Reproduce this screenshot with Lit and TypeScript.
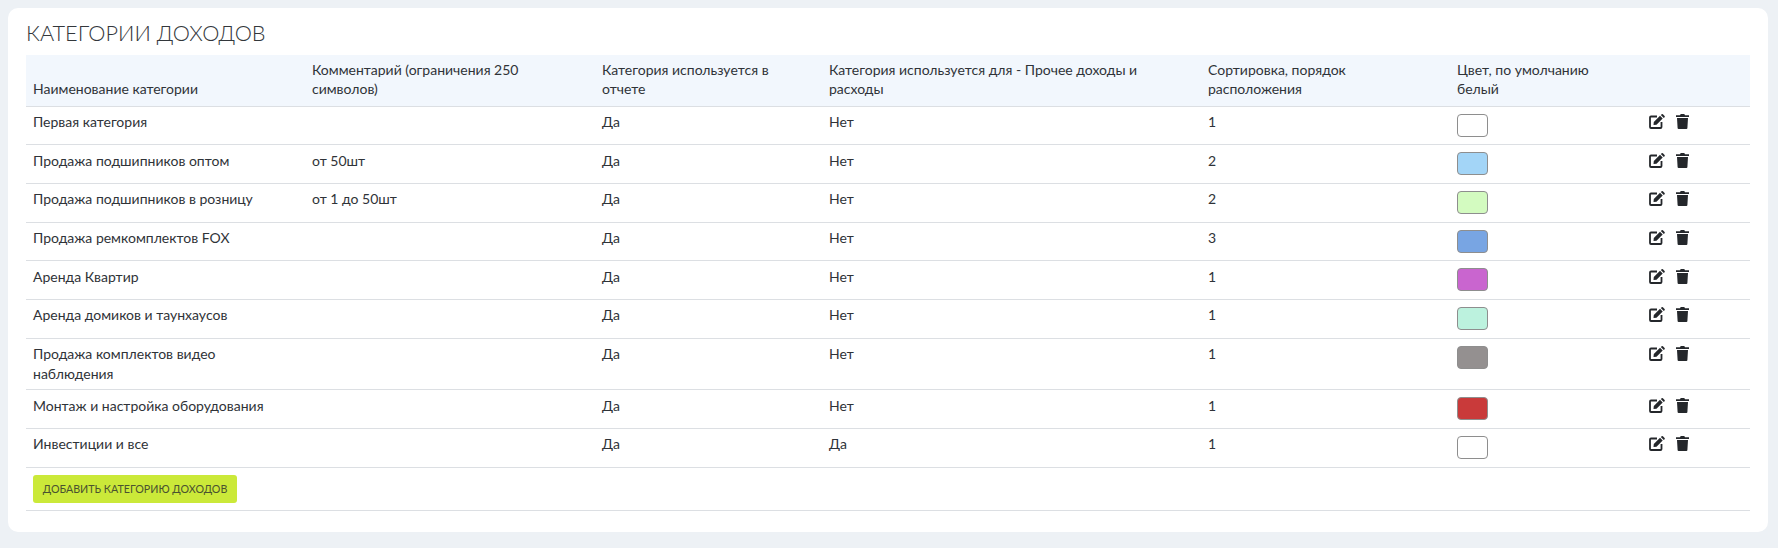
import { LitElement, html, css, svg } from "lit";
import { customElement } from "lit/decorators.js";

const rows = [
  ["Первая категория", "", "Да", "Нет", "1", "#ffffff"],
  ["Продажа подшипников оптом", "от 50шт", "Да", "Нет", "2", "#a3d5f7"],
  ["Продажа подшипников в розницу", "от 1 до 50шт", "Да", "Нет", "2", "#d3fbc0"],
  ["Продажа ремкомплектов FOX", "", "Да", "Нет", "3", "#78a5e3"],
  ["Аренда Квартир", "", "Да", "Нет", "1", "#c965cf"],
  ["Аренда домиков и таунхаусов", "", "Да", "Нет", "1", "#bcf2de"],
  ["Продажа комплектов видео наблюдения", "", "Да", "Нет", "1", "#949090"],
  ["Монтаж и настройка оборудования", "", "Да", "Нет", "1", "#c93a3a"],
  ["Инвестиции и все", "", "Да", "Да", "1", "#ffffff"],
];

const editIcon = svg`<path fill="none" stroke="currentColor" stroke-width="1.800" d="M8 2.500H2a1 1 0 0 0-1 1V13a1 1 0 0 0 1 1h9.500a1 1 0 0 0 1-1V8"/><path fill="currentColor" d="M4.800 8l6.200-6.200 2.700 2.700-6.200 6.200-3 .4zM11.800 1l.9-.7a1 1 0 0 1 1.200 0l1.700 1.700a1 1 0 0 1 0 1.200l-.8.9z"/>`;
const trashIcon = svg`<path fill="currentColor" d="M4 1.200 4.700 0h3.600l.7 1.200H13V3H0V1.200zM1 4h11l-.6 10a1 1 0 0 1-1 1H2.600a1 1 0 0 1-1-1z"/>`;

@customElement("app-root")
export class AppRoot extends LitElement {
  static styles = css`
    :host { display: block; min-height: 548px; background: #edf1f5; padding: 8px 10px 16px 8px; box-sizing: border-box; font-family: "Lato", "Open Sans", sans-serif; color: #2f3338; }
    .card { background: #fff; border-radius: 10px; padding: 7px 18px 22px 18px; height: 524px; box-sizing: border-box; }
    h2 { margin: 0 0 4px; font-size: 21.700px; font-weight: 300; line-height: 36px; color: #33373b; }
    table { width: 100%; border-collapse: collapse; table-layout: fixed; font-size: 14px; line-height: 19.500px; }
    .c1 { width: 279px; } .c2 { width: 290px; } .c3 { width: 227px; } .c4 { width: 379px; } .c5 { width: 249px; } .c6 { width: 192px; }
    th { background: #f2f7fd; font-weight: 400; text-align: left; vertical-align: bottom; padding: 4px 36px 7px 7px; height: 51px; box-sizing: border-box; border-bottom: 1px solid #dcdfe3; }
    td { vertical-align: top; padding: 5.500px 7px 6px; height: 38.700px; box-sizing: border-box; border-bottom: 1px solid #dcdfe3; }
    td.name { padding-right: 30px; }
    .swatch { width: 31px; height: 23px; box-sizing: border-box; border: 1px solid #8e8e8e; border-radius: 4px; margin-top: 1.500px; }
    .actions { display: flex; gap: 11px; align-items: flex-start; color: #24272b; padding-top: 2px; }
    .actions svg { display: block; }
    td.add { padding: 7px 7px 7px; height: 43px; }
    button { display: block; background: #cbe939; border: 0; border-radius: 3px; height: 28px; width: 204px; padding: 0; font: inherit; font-size: 10.700px; line-height: 28px; text-align: center; white-space: nowrap; color: #4a5230; }
  `;
  render() {
    return html`<div class="card">
      <h2>КАТЕГОРИИ ДОХОДОВ</h2>
      <table>
        <colgroup><col class="c1"><col class="c2"><col class="c3"><col class="c4"><col class="c5"><col class="c6"><col></colgroup>
        <thead><tr>
          <th>Наименование категории</th>
          <th>Комментарий (ограничения 250 символов)</th>
          <th>Категория используется в отчете</th>
          <th>Категория используется для - Прочее доходы и расходы</th>
          <th>Сортировка, порядок расположения</th>
          <th>Цвет, по умолчанию белый</th>
          <th></th>
        </tr></thead>
        <tbody>
          ${rows.map((r) => html`<tr>
            <td class="name">${r[0]}</td><td>${r[1]}</td><td>${r[2]}</td><td>${r[3]}</td><td>${r[4]}</td>
            <td><div class="swatch" style="background:${r[5]}"></div></td>
            <td><div class="actions">
              <svg width="16" height="15" viewBox="0 0 16 15">${editIcon}</svg>
              <svg width="13" height="15" viewBox="0 0 13 15">${trashIcon}</svg>
            </div></td>
          </tr>`)}
          <tr><td colspan="7" class="add"><button>ДОБАВИТЬ КАТЕГОРИЮ ДОХОДОВ</button></td></tr>
        </tbody>
      </table>
    </div>`;
  }
}
